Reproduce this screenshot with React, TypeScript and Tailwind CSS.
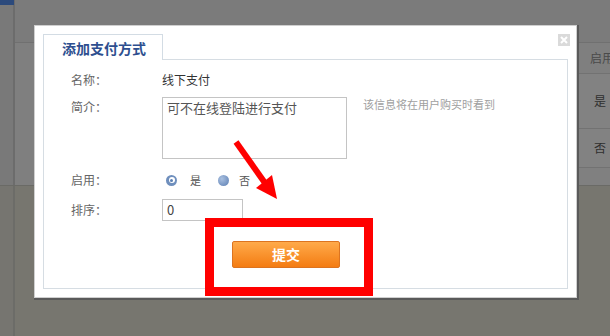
import React from "react";

export default function App() {
  return (
    <div className="relative w-[610px] h-[336px] overflow-hidden bg-[#7b7b7b] font-['Noto_Sans_CJK_SC','Noto_Sans',sans-serif]">
      {/* background page */}
      <div className="flex flex-col w-full h-full">
        <div className="flex h-[185px]">
          <div className="relative w-[15px] bg-[#797979] border-r-2 border-[#6c6c6c]">
            <div className="h-[5px] w-[14px] bg-[#2c4a7c]" />
          </div>
          <div className="flex-1 flex flex-col">
            <div className="h-[42px]" />
            <div className="flex-1 flex justify-end border-t border-[#707070] bg-[#7f7f7f]">
              <div className="w-[32px] flex flex-col text-[12px]">
                <div className="h-[31px] flex items-center pl-[12px] text-[#4a4a4a] border-b border-[#727272] whitespace-nowrap">启用</div>
                <div className="h-[55px] flex items-center pl-[16px] text-[#2f2f2f] border-b border-[#727272] bg-[#828282]">是</div>
                <div className="h-[39px] flex items-center pl-[16px] text-[#2f2f2f] border-b border-[#727272] bg-[#828282]">否</div>
                <div className="flex-1 bg-[#808080]" />
              </div>
            </div>
          </div>
        </div>
        <div className="flex-1 flex bg-[#77766f] border-t border-[#6a6a66]">
          <div className="w-[15px] bg-[#767570] border-r-2 border-[#6c6c68]" />
        </div>
      </div>

      {/* dialog */}
      <div className="absolute left-[34px] top-[25px] w-[545px] h-[275px] bg-[#5a5a5a]">
        <div className="w-[543px] h-[273px] bg-white border border-[#cfcfcf] p-[8px] flex flex-col">
          <div className="flex items-end justify-between h-[25px]">
            <div className="relative z-10 -mb-px h-[26px] w-[120px] bg-white border border-b-0 border-[#d3dce4] flex items-center pl-[18px] text-[14px] font-bold text-[#2e4f8f] leading-none">
              添加支付方式
            </div>
            <svg width="12" height="12" viewBox="0 0 12 12" className="self-start mr-[-2px]">
              <rect x="0" y="0" width="12" height="12" fill="#dadada" />
              <path d="M3 3 L9 9 M9 3 L3 9" stroke="#ffffff" strokeWidth="2" />
            </svg>
          </div>
          <div className="flex-1 border border-[#d6dde3] flex flex-col text-[12px]">
            <div className="flex items-center h-[20px] mt-[10px]">
              <div className="w-[91px] ml-[27px] text-[#666]">名称：</div>
              <div className="text-[#333]">线下支付</div>
            </div>
            <div className="flex items-start mt-[7px]">
              <div className="w-[91px] ml-[27px] h-[20px] leading-[20px] text-[#666]">简介：</div>
              <div className="w-[185px] h-[62px] border border-[#c4c4c4] pl-[4px] pt-[1px] text-[13px] leading-[18px] text-[#555]">
                可不在线登陆进行支付
              </div>
              <div className="ml-[16px] text-[11px] leading-[14px] text-[#a0a0a0]">该信息将在用户购买时看到</div>
            </div>
            <div className="flex items-center h-[20px] mt-[11px]">
              <div className="w-[91px] ml-[27px] text-[#666]">启用：</div>
              <div className="flex items-center ml-[4px]">
                <div className="w-[11px] h-[11px] rounded-full bg-[#6f8fbd] flex items-center justify-center">
                  <div className="w-[6px] h-[6px] rounded-full bg-white flex items-center justify-center">
                    <div className="w-[3px] h-[3px] rounded-full bg-[#5b7fb3]" />
                  </div>
                </div>
                <span className="ml-[13px] text-[11px] text-[#555]">是</span>
                <div className="ml-[17px] w-[11px] h-[11px] rounded-full bg-[radial-gradient(circle_at_35%_35%,#a9c0e0,#5a7db2)]" />
                <span className="ml-[10px] text-[11px] text-[#555]">否</span>
              </div>
            </div>
            <div className="flex items-center h-[22px] mt-[9px]">
              <div className="w-[91px] ml-[27px] text-[#666]">排序：</div>
              <div className="w-[81px] h-[22px] border border-[#c4c4c4] pl-[4px] flex items-center text-[13px] text-[#444]">0</div>
            </div>
            <div className="mt-[20px] ml-[188px] w-[108px] h-[27px] rounded-[2px] border border-[#dc7420] bg-[linear-gradient(#ffaa4a,#f47c12)] flex items-center justify-center text-white font-bold text-[14px]">
              提交
            </div>
          </div>
        </div>
      </div>

      {/* annotation */}
      <div className="absolute left-[205px] top-[218px] w-[168px] h-[78px] border-[9px] border-[#ff0000]" />
      <svg className="absolute left-0 top-0" width="610" height="336" viewBox="0 0 610 336">
        <line x1="236" y1="142" x2="265" y2="183" stroke="#ff0000" strokeWidth="6" />
        <polygon points="277,199 256,188 272,175" fill="#ff0000" />
      </svg>
    </div>
  );
}
